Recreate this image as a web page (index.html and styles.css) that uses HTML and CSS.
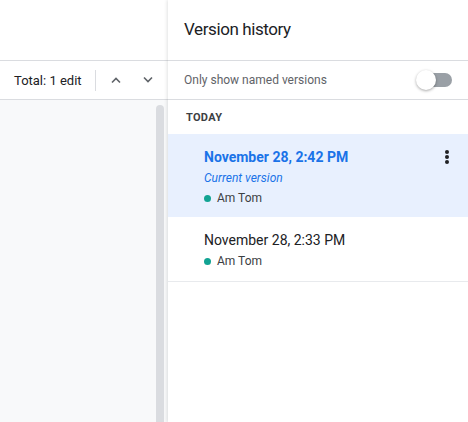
FILE: index.html
```html
<!DOCTYPE html>
<html>
<head>
<meta charset="utf-8">
<link rel="stylesheet" href="styles.css">
</head>
<body>
<div class="app">
  <div class="left">
    <div class="left-top"></div>
    <div class="toolbar">
      <span class="total">Total: 1 edit</span>
      <span class="sep"></span>
      <span class="chev first">
        <svg width="12" height="8" viewBox="0 0 12 8"><path d="M2 6.5 L6 2.5 L10 6.5" fill="none" stroke="#5f6368" stroke-width="1.6"/></svg>
      </span>
      <span class="chev">
        <svg width="12" height="8" viewBox="0 0 12 8"><path d="M2 1.5 L6 5.5 L10 1.5" fill="none" stroke="#5f6368" stroke-width="1.6"/></svg>
      </span>
    </div>
    <div class="doc">
      <div class="scrollbar"></div>
    </div>
  </div>
  <div class="panel">
    <div class="panel-head">Version history</div>
    <div class="filter">
      <span class="filter-label">Only show named versions</span>
      <span class="toggle"><span class="track"></span><span class="thumb"></span></span>
    </div>
    <div class="section">TODAY</div>
    <div class="item selected">
      <div class="item-body">
        <div class="item-title">November 28, 2:42 PM</div>
        <div class="item-current">Current version</div>
        <div class="item-author"><span class="dot"></span>Am Tom</div>
      </div>
      <svg class="kebab" width="20" height="20" viewBox="0 0 20 20"><circle cx="10" cy="5" r="2"/><circle cx="10" cy="10" r="2"/><circle cx="10" cy="15" r="2"/></svg>
    </div>
    <div class="item plain">
      <div class="item-body">
        <div class="item-title">November 28, 2:33 PM</div>
        <div class="item-author gap"><span class="dot"></span>Am Tom</div>
      </div>
    </div>
  </div>
</div>
</body>
</html>
```
FILE: styles.css
```css
html, body {
  margin: 0;
  padding: 0;
  height: 100%;
  overflow: hidden;
  background: #fff;
  font-family: Roboto, "Liberation Sans", Arial, sans-serif;
}
.app {
  display: flex;
  height: 422px;
  width: 468px;
}
.left {
  width: 168px;
  flex: none;
  display: flex;
  flex-direction: column;
}
.left-top {
  height: 60px;
  border-bottom: 1px solid #dadce0;
  flex: none;
}
.toolbar {
  height: 38px;
  border-bottom: 1px solid #dadce0;
  display: flex;
  align-items: center;
  flex: none;
}
.total {
  font-size: 13px;
  color: #202124;
  margin-left: 14px;
  width: 81px;
}
.sep {
  width: 1px;
  height: 21px;
  background: #dadce0;
}
.chev {
  width: 32px;
  display: flex;
  justify-content: center;
  align-items: center;
}
.chev.first {
  margin-left: 4px;
}
.doc {
  flex: 1;
  background: #f8f9fa;
  display: flex;
  justify-content: flex-end;
  padding-top: 5px;
  padding-right: 4px;
}
.scrollbar {
  width: 8px;
  background: #dadce0;
  border-radius: 4px 4px 0 0;
}
.panel {
  width: 300px;
  flex: none;
  background: #fff;
  box-shadow: -1px 0 3px rgba(60, 64, 67, 0.15);
  position: relative;
}
.panel-head {
  height: 61px;
  box-sizing: border-box;
  padding: 17px 0 0 16px;
  font-family: Roboto, "Open Sans", sans-serif;
  font-size: 17px;
  letter-spacing: -0.4px;
  line-height: 24px;
  color: #202124;
  border-bottom: 1px solid #dadce0;
}
.filter {
  height: 38px;
  display: flex;
  align-items: center;
  justify-content: space-between;
  padding: 0 16px;
  border-bottom: 1px solid #dadce0;
}
.filter-label {
  font-size: 12px;
  color: #5f6368;
}
.toggle {
  position: relative;
  width: 36px;
  height: 20px;
  display: block;
}
.track {
  position: absolute;
  left: 1px;
  top: 3px;
  width: 35px;
  height: 14px;
  border-radius: 7px;
  background: #9aa0a6;
}
.thumb {
  position: absolute;
  left: 0;
  top: 0;
  width: 20px;
  height: 20px;
  border-radius: 50%;
  background: #fff;
  box-shadow: 0 1px 3px rgba(0, 0, 0, 0.35);
}
.section {
  height: 34px;
  box-sizing: border-box;
  padding: 11px 0 0 18px;
  font-size: 11px;
  line-height: 14px;
  font-weight: 700;
  letter-spacing: 0.3px;
  color: #3c4043;
}
.item {
  display: flex;
  padding-left: 36px;
  padding-right: 11px;
}
.item-body {
  flex: 1;
}
.selected {
  background: #e8f0fe;
  height: 83px;
  box-sizing: border-box;
  padding-top: 13px;
}
.selected .item-title {
  color: #1a73e8;
  font-weight: 700;
}
.plain {
  height: 65px;
  box-sizing: border-box;
  padding-top: 13px;
  border-bottom: 1px solid #e8eaed;
}
.item-title {
  font-size: 14px;
  line-height: 20px;
  color: #202124;
}
.item-current {
  font-size: 12px;
  line-height: 22px;
  font-style: italic;
  color: #1a73e8;
}
.item-author {
  font-size: 12px;
  line-height: 18px;
  color: #3c4043;
  display: flex;
  align-items: center;
}
.item-author.gap {
  line-height: 20px;
  margin-top: 1px;
}
.dot {
  width: 7px;
  height: 7px;
  border-radius: 50%;
  background: #12a393;
  margin-right: 6px;
}
.kebab {
  fill: #202124;
  flex: none;
}
```
